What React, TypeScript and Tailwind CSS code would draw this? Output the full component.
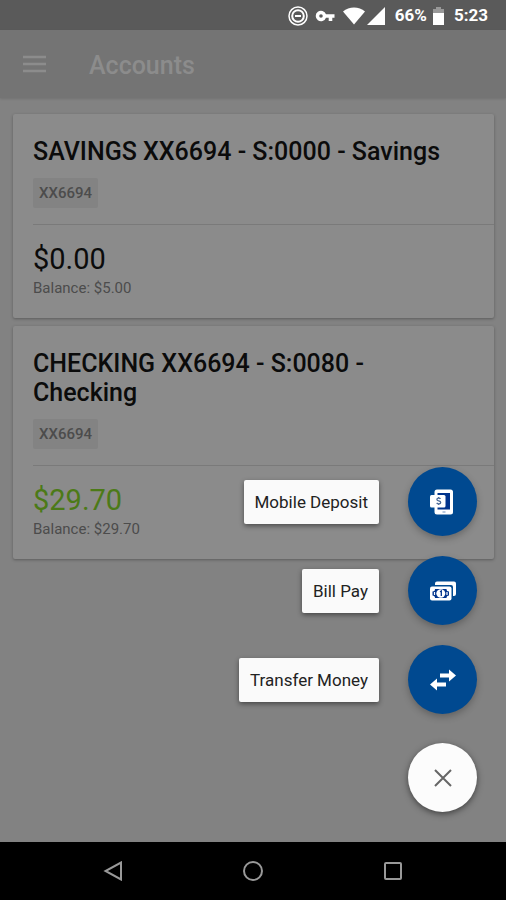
import { useState } from "react"
import type { ReactNode } from "react"

interface Account {
  id: string
  name: string
  mask: string
  available: string
  balance: string
  positive: boolean
}

const accounts: Account[] = [
  {
    id: "savings",
    name: "SAVINGS XX6694 - S:0000 - Savings",
    mask: "XX6694",
    available: "$0.00",
    balance: "$5.00",
    positive: false,
  },
  {
    id: "checking",
    name: "CHECKING XX6694 - S:0080 - Checking",
    mask: "XX6694",
    available: "$29.70",
    balance: "$29.70",
    positive: true,
  },
]

function DepositIcon() {
  return (
    <svg viewBox="0 0 28 28" className="h-7 w-7" aria-hidden="true">
      <rect x="5.5" y="1.5" width="18.5" height="25" rx="2.5" fill="#fff" />
      <rect x="8.5" y="5" width="12.5" height="16.5" fill="#00338c" />
      <rect x="1" y="7" width="15.5" height="12.5" rx="1.5" fill="#fff" />
      <path
        d="M11.5 10.8c-.6-1-3.6-1.2-3.6.6 0 2 3.8 1 3.8 3 0 1.9-3.2 1.7-4 .5M9.7 9v1.2M9.7 15.8V17"
        fill="none"
        stroke="#4a6a98"
        strokeWidth="1.3"
      />
      <path d="M13.5 24h3" stroke="#6f8fbd" strokeWidth="1" />
    </svg>
  )
}

function BillsIcon() {
  return (
    <svg viewBox="0 0 28 22" className="h-[22px] w-7" aria-hidden="true">
      <path d="M8 1.5h17a2 2 0 0 1 2 2V14a2 2 0 0 1-2 2h-1V7a2 2 0 0 0-2-2H6V3.5a2 2 0 0 1 2-2z" fill="#fff" />
      <rect x="1" y="6.5" width="21.5" height="14" rx="2" fill="#fff" />
      <path
        d="M6 9h11.5a2.5 2.5 0 0 0 2.5 2.5v4a2.5 2.5 0 0 0-2.5 2.5H6a2.5 2.5 0 0 0-2.5-2.5v-4A2.5 2.5 0 0 0 6 9z"
        fill="#00338c"
      />
      <ellipse cx="11.8" cy="13.5" rx="4.5" ry="4.2" fill="#fff" />
      <path d="M11 11.8l1.3-.8v5" fill="none" stroke="#00338c" strokeWidth="1.3" />
      <path d="M5.5 12v3M18 12v3" stroke="#fff" strokeWidth="1.2" />
    </svg>
  )
}

function TransferIcon() {
  return (
    <svg viewBox="0 0 28 22" className="h-[22px] w-7" fill="#fff" aria-hidden="true">
      <path d="M20 .5L27 6.5l-7 6V8.500H11v-4h9z" />
      <path d="M8 9.500L1 15.5l7 6V17.5h9v-4H8z" />
    </svg>
  )
}

interface Action {
  label: string
  icon: ReactNode
}

const actions: Action[] = [
  { label: "Mobile Deposit", icon: <DepositIcon /> },
  { label: "Bill Pay", icon: <BillsIcon /> },
  { label: "Transfer Money", icon: <TransferIcon /> },
]

function StatusBar() {
  return (
    <div className="flex h-[30px] items-center justify-end bg-[#5a5a5a] pt-0.5 pr-[18px] text-[17px] font-bold text-white">
      <svg viewBox="0 0 20 20" className="h-5 w-5" fill="none" stroke="#fff" aria-hidden="true">
        <circle cx="10" cy="10" r="9" strokeWidth="1.5" />
        <circle cx="10" cy="10" r="5.8" strokeWidth="2" />
        <path d="M7 10h6" strokeWidth="2" />
      </svg>
      <svg viewBox="0 0 20 12" className="ml-[7px] h-3 w-5" fill="#fff" aria-hidden="true">
        <path
          fillRule="evenodd"
          d="M11 4.2A5.3 5.3 0 1 0 11 7.8h2.7V11h3.6V7.8H19.5V4.2zM6 4.2a1.8 1.8 0 1 1 0 3.6 1.8 1.8 0 0 1 0-3.6z"
        />
      </svg>
      <svg viewBox="0 0 22 18" className="ml-2 h-[18px] w-[22px]" fill="#fff" aria-hidden="true">
        <path d="M11 17.5L0 4.5C6-.7 16-.7 22 4.5z" />
      </svg>
      <svg viewBox="0 0 18 18" className="ml-0.5 h-[18px] w-[18px]" fill="#fff" aria-hidden="true">
        <path d="M18 0v18H0z" />
      </svg>
      <span className="ml-2.5">66%</span>
      <svg viewBox="0 0 11 18" className="ml-1.5 h-[18px] w-[11px]" aria-hidden="true">
        <path d="M3 0h5v2h3v5H0V2h3z" fill="#989898" />
        <path d="M0 6h11v12H0z" fill="#fff" />
      </svg>
      <span className="ml-2.5">5:23</span>
    </div>
  )
}

function AccountCard({ account }: { account: Account }) {
  return (
    <article className="rounded-xs bg-[#8b8b8b] pt-[23px] pb-5 pl-5 shadow-[0_1px_3px_rgba(0,0,0,0.3)]">
      <h2 className="pr-10 text-[25px] leading-[29px] font-medium text-[#0b0b0b]">{account.name}</h2>
      <span className="mt-3 flex h-[30px] w-fit items-center rounded-xs bg-[#838383] px-1.5 text-[15px] font-medium text-[#4c4c4c]">
        {account.mask}
      </span>
      <div className="mt-4 border-t border-[#7a7a7a] pt-4">
        <p className={`text-[29px] leading-9 ${account.positive ? "text-[#4c7a17]" : "text-[#0b0b0b]"}`}>
          {account.available}
        </p>
        <p className="mt-px text-[15px] leading-5 text-[#4c4c4c]">Balance: {account.balance}</p>
      </div>
    </article>
  )
}

function SpeedDial() {
  const [open, setOpen] = useState(true)

  return (
    <div className="absolute right-[29px] bottom-[30px] flex flex-col items-end gap-[29px]">
      {open && (
        <ul className="flex flex-col items-end gap-5">
          {actions.map((action) => (
            <li key={action.label}>
              <button type="button" className="flex items-center gap-[29px]">
                <span className="flex h-11 items-center rounded-xs bg-[#fafafa] px-[11px] pt-0.5 text-[17px] text-[#222222] shadow-[0_2px_5px_rgba(0,0,0,0.45)]">
                  {action.label}
                </span>
                <span className="flex h-[69px] w-[69px] items-center justify-center rounded-full bg-[#004990] shadow-[0_3px_7px_rgba(0,0,0,0.25)]">
                  {action.icon}
                </span>
              </button>
            </li>
          ))}
        </ul>
      )}
      <button
        type="button"
        aria-label={open ? "Close menu" : "Open menu"}
        onClick={() => setOpen(!open)}
        className="flex h-[69px] w-[69px] items-center justify-center rounded-full bg-[#fcfcfc] shadow-[0_2px_6px_rgba(0,0,0,0.5)]"
      >
        <svg viewBox="0 0 18 18" className="h-[18px] w-[18px]" stroke="#666" strokeWidth="2" aria-hidden="true">
          <path d="M1 1l16 16M17 1L1 17" />
        </svg>
      </button>
    </div>
  )
}

function NavBar() {
  return (
    <nav className="flex h-[58px] items-center justify-around bg-black px-[43px]">
      <button type="button" aria-label="Back">
        <svg viewBox="0 0 20 20" className="h-5 w-5" fill="none" stroke="#999" strokeWidth="2" aria-hidden="true">
          <path d="M18 1.5v17L2.5 10z" />
        </svg>
      </button>
      <button type="button" aria-label="Home">
        <svg viewBox="0 0 20 20" className="h-5 w-5" fill="none" stroke="#999" strokeWidth="2" aria-hidden="true">
          <circle cx="10" cy="10" r="9" />
        </svg>
      </button>
      <button type="button" aria-label="Recent apps">
        <svg viewBox="0 0 20 20" className="h-5 w-5" fill="none" stroke="#999" strokeWidth="2" aria-hidden="true">
          <rect x="2" y="2" width="16" height="16" rx="1" />
        </svg>
      </button>
    </nav>
  )
}

export default function App() {
  return (
    <div className="flex min-h-screen flex-col bg-[#828282] font-[Roboto,sans-serif]">
      <StatusBar />

      {/* App bar */}
      <header className="flex h-[68px] items-center gap-[43px] bg-[#747474] px-[23px] shadow-[0_1px_2px_rgba(0,0,0,0.12)]">
        <button type="button" aria-label="Menu">
          <svg viewBox="0 0 23 18" className="h-[18px] w-[23px]" stroke="#8c8c8c" strokeWidth="2.5" aria-hidden="true">
            <path d="M0 2h23M0 9h23M0 16h23" />
          </svg>
        </button>
        <h1 className="pt-1 text-[25px] font-medium text-[#8c8c8c]">Accounts</h1>
      </header>

      <main className="relative flex-1">
        <div className="flex flex-col gap-2 pt-4 pr-3 pb-8 pl-[13px]">
          {accounts.map((account) => (
            <AccountCard key={account.id} account={account} />
          ))}
        </div>
        <SpeedDial />
      </main>

      <NavBar />
    </div>
  )
}
